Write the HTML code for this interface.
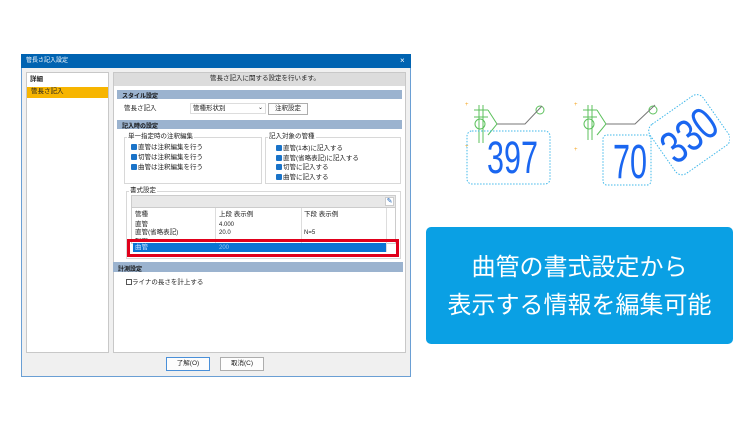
<!DOCTYPE html>
<html><head><meta charset="utf-8"><style>
*{margin:0;padding:0;box-sizing:border-box}
body{width:750px;height:430px;background:#fff;position:relative;overflow:hidden;font-family:"Liberation Sans","Noto Sans CJK JP",sans-serif;font-size:6.5px;color:#222}
.a{position:absolute}
.t{position:absolute;white-space:nowrap;line-height:1}
.bar{position:absolute;background:#9bb3cf;font-weight:bold;font-size:6.5px;padding:2px 0 0 5px;color:#111}
.cb{display:inline-block;width:6px;height:6px;background:#1a73c8;border-radius:1px;margin-right:1px;vertical-align:-1px}
.grp{position:absolute;border:1px solid #d8d8d8;background:#fff}
.btn{position:absolute;border:1px solid #adadad;background:#fdfdfd;font-size:6.5px;text-align:center;line-height:10px;white-space:nowrap}
</style></head><body>
<div class="a" style="left:21px;top:54px;width:390px;height:323px;background:#f0f0f0;border:1px solid #6a9fd4"></div>
<div class="a" style="left:21px;top:54px;width:390px;height:14px;background:#0063b1"></div>
<div class="t" style="left:26px;top:58px;color:#fff;font-size:6px">管長さ記入設定</div>
<div class="t" style="left:400px;top:57px;color:#fff;font-size:8px">×</div>
<div class="a" style="left:26px;top:72px;width:83px;height:281px;background:#fff;border:1px solid #c8c8c8"></div>
<div class="t" style="left:30px;top:77px;font-weight:bold">詳細</div>
<div class="a" style="left:27px;top:87px;width:81px;height:11px;background:#f7b500"></div>
<div class="t" style="left:31px;top:89px">管長さ記入</div>
<div class="a" style="left:113px;top:72px;width:293px;height:281px;background:#fff;border:1px solid #c8c8c8"></div>
<div class="a" style="left:114px;top:73px;width:291px;height:13px;background:#dcdcdc"></div>
<div class="t" style="left:210px;top:76px">管長さ記入に関する設定を行います。</div>
<div class="bar" style="left:117px;top:90px;width:285px;height:9px;font-size:6px;padding-top:1px">スタイル設定</div>
<div class="t" style="left:124px;top:106px">管長さ記入</div>
<div class="a" style="left:190px;top:103px;width:76px;height:11px;background:#fff;border:1px solid #ddd"></div>
<div class="t" style="left:193px;top:106px">管種形状別</div>
<div class="t" style="left:258px;top:105px;font-size:6px">⌄</div>
<div class="btn" style="left:268px;top:103px;width:40px;height:12px">注釈設定</div>
<div class="bar" style="left:117px;top:120px;width:285px;height:9px;font-size:6px;padding-top:1px">記入時の設定</div>
<div class="grp" style="left:124px;top:137px;width:138px;height:47px"></div>
<div class="t" style="left:127px;top:134px;background:#fff;padding:0 1px">単一指定時の注釈編集</div>
<div class="t" style="left:131px;top:144px"><span class="cb"></span>直管は注釈編集を行う</div>
<div class="t" style="left:131px;top:154px"><span class="cb"></span>切管は注釈編集を行う</div>
<div class="t" style="left:131px;top:164px"><span class="cb"></span>曲管は注釈編集を行う</div>
<div class="grp" style="left:265px;top:137px;width:136px;height:47px"></div>
<div class="t" style="left:268px;top:134px;background:#fff;padding:0 1px">記入対象の管種</div>
<div class="t" style="left:276px;top:145px"><span class="cb"></span>直管(1本)に記入する</div>
<div class="t" style="left:276px;top:155px"><span class="cb"></span>直管(省略表記)に記入する</div>
<div class="t" style="left:276px;top:164px"><span class="cb"></span>切管に記入する</div>
<div class="t" style="left:276px;top:174px"><span class="cb"></span>曲管に記入する</div>
<div class="grp" style="left:126px;top:191px;width:275px;height:68px"></div>
<div class="t" style="left:129px;top:188px;background:#fff;padding:0 1px">書式設定</div>
<div class="a" style="left:131px;top:195px;width:265px;height:13px;background:#e8e8e8;border:1px solid #ccc"></div>
<div class="a" style="left:385px;top:197px;width:9px;height:9px;background:#fff;border:1px solid #ccc;color:#1a5fb4;font-size:7px;line-height:8px;text-align:center">✎</div>
<div class="a" style="left:131px;top:208px;width:265px;height:36px;background:#fff;border:1px solid #ccc;border-top:0"></div>
<div class="a" style="left:215px;top:208px;width:1px;height:44px;background:#ddd"></div>
<div class="a" style="left:301px;top:208px;width:1px;height:44px;background:#ddd"></div>
<div class="a" style="left:386px;top:208px;width:1px;height:44px;background:#ddd"></div>
<div class="t" style="left:135px;top:212px">管種</div><div class="t" style="left:219px;top:212px">上段 表示例</div><div class="t" style="left:304px;top:212px">下段 表示例</div>
<div class="t" style="left:135px;top:222px">直管</div><div class="t" style="left:219px;top:222px;font-size:6px">4.000</div>
<div class="t" style="left:135px;top:230px">直管(省略表記)</div><div class="t" style="left:219px;top:230px;font-size:6px">20.0</div><div class="t" style="left:304px;top:230px;font-size:6px">N=5</div>
<div class="t" style="left:135px;top:238px;height:4px;overflow:hidden">切管</div>
<div class="a" style="left:133px;top:243px;width:253px;height:9px;background:#0a74d4"></div>
<div class="t" style="left:135px;top:245px;color:#cfe3ff">曲管</div><div class="t" style="left:219px;top:245px;color:#9cc4f0;font-size:6px">200</div>
<div class="a" style="left:127px;top:239px;width:272px;height:18px;border:3px solid #e0001b"></div>
<div class="bar" style="left:113px;top:262px;width:290px;height:10px;font-size:6px">計測設定</div>
<div class="t" style="left:126px;top:279px"><span style="display:inline-block;width:6px;height:6px;border:1px solid #555;vertical-align:-1px"></span>ライナの長さを計上する</div>
<div class="btn" style="left:166px;top:357px;width:44px;height:14px;border-color:#4a90d9;line-height:12px">了解(O)</div>
<div class="btn" style="left:220px;top:357px;width:44px;height:14px;line-height:12px">取消(C)</div>

<svg class="a" style="left:460px;top:90px" width="270" height="110" viewBox="0 0 270 110">
<g stroke="#5cc15c" fill="none" stroke-width="1">
<line x1="19" y1="15" x2="19" y2="53"/><line x1="23" y1="15" x2="23" y2="53"/>
<line x1="14" y1="20" x2="28" y2="20"/><line x1="14" y1="27" x2="28" y2="27"/>
<circle cx="20" cy="34" r="5"/>
<polyline points="28,20 37,34 28,45"/>
<circle cx="80" cy="20" r="4"/>
<line x1="128" y1="15" x2="128" y2="50"/><line x1="132" y1="15" x2="132" y2="50"/>
<line x1="123" y1="20" x2="137" y2="20"/><line x1="123" y1="27" x2="137" y2="27"/>
<circle cx="129" cy="34" r="5"/>
<polyline points="137,20 146,34 137,45"/>
<circle cx="193" cy="20" r="4"/>
</g>
<polyline points="37,34 65,34 82,16" stroke="#777" fill="none"/>
<polyline points="146,34 175,34 195,15" stroke="#777" fill="none"/>
<g fill="#f5a623" font-size="6"><text x="5" y="16">+</text><text x="5" y="58">+</text><text x="114" y="16">+</text><text x="114" y="61">+</text></g>
<g stroke="#40b8ea" stroke-dasharray="1.5,1.5" fill="none">
<rect x="7" y="41" width="83" height="53" rx="5"/>
<rect x="143" y="45" width="48" height="50" rx="4"/>
<rect x="197" y="15" width="65" height="60" rx="8" transform="rotate(-35 229 45)"/>
</g>
<g fill="#1a66f0" font-family="Liberation Sans,sans-serif">
<text x="27" y="83" font-size="45" textLength="51" lengthAdjust="spacingAndGlyphs">397</text>
<text x="153" y="88" font-size="48" textLength="34" lengthAdjust="spacingAndGlyphs">70</text>
<text x="229" y="61" font-size="46" text-anchor="middle" textLength="58" lengthAdjust="spacingAndGlyphs" transform="rotate(-38 229 45)">330</text>
</g>
</svg>

<div class="a" style="left:426px;top:227px;width:307px;height:117px;background:#0aa0e4;border-radius:5px;color:#fff;font-size:24px;text-align:center;line-height:38px;padding-top:22px">曲管の書式設定から<br>表示する情報を編集可能</div>
</body></html>
